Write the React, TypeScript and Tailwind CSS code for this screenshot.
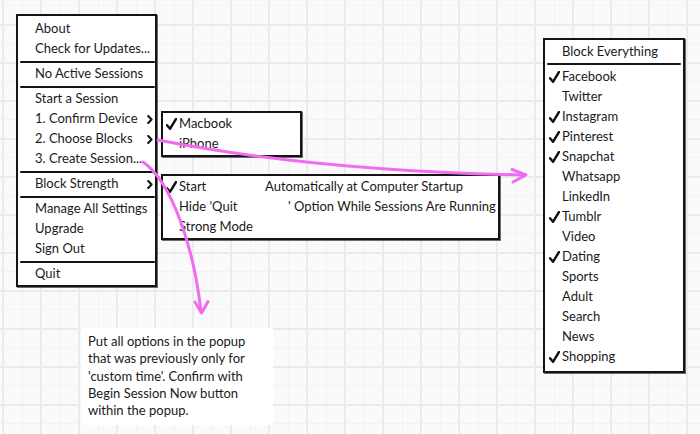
import React from 'react';

const font = "font-['Lato','Open_Sans',sans-serif]";

const Check = () => (
  <svg width="11" height="12" viewBox="0 0 11 12" className="shrink-0">
    <path d="M1 7.2 L4 10.8 L10 1" fill="none" stroke="#111" strokeWidth="2.4" strokeLinecap="round" strokeLinejoin="round" />
  </svg>
);

const Chevron = () => (
  <svg width="6" height="9" viewBox="0 0 6 9" className="shrink-0">
    <path d="M1.2 1 L4.6 4.5 L1.2 8" fill="none" stroke="#111" strokeWidth="2" strokeLinecap="round" strokeLinejoin="round" />
  </svg>
);

const Sep = () => <div className="ml-[2px] h-[2px] my-[1.5px] bg-[#141414] rounded-full" />;

const MenuRow = ({ label, sub }: { label: string; sub?: boolean }) => (
  <div className="h-5 flex items-center justify-between pl-[17px] pr-[2px]">
    <span>{label}</span>
    {sub && <Chevron />}
  </div>
);

const CheckRow = ({ label, checked }: { label: string; checked?: boolean }) => (
  <div className="h-5 flex items-center">
    <div className="w-[17px] pl-[4px] flex items-center">{checked && <Check />}</div>
    <span>{label}</span>
  </div>
);

const blocks: [string, boolean][] = [
  ['Facebook', true],
  ['Twitter', false],
  ['Instagram', true],
  ['Pinterest', true],
  ['Snapchat', true],
  ['Whatsapp', false],
  ['LinkedIn', false],
  ['Tumblr', true],
  ['Video', false],
  ['Dating', true],
  ['Sports', false],
  ['Adult', false],
  ['Search', false],
  ['News', false],
  ['Shopping', true],
];

const box = 'absolute bg-white border-2 border-[#141414] shadow-[1px_1px_0_#6b6b6b]';

export default function App() {
  return (
    <div className={`w-[700px] h-[434px] overflow-hidden bg-[#fafafa] bg-[linear-gradient(to_right,#f3f3f3_1px,transparent_1px),linear-gradient(to_bottom,#f3f3f3_1px,transparent_1px)] bg-[size:19px_19px] bg-[position:3px_5px] ${font} text-[13px] text-[#1a1a1a]`}>
      <div className="relative w-full h-full bg-[linear-gradient(to_right,#ebebeb_2px,transparent_2px),linear-gradient(to_bottom,#ebebeb_2px,transparent_2px)] bg-[size:38px_38px] bg-[position:2px_24px]">
        {/* main menu */}
        <div className={`${box} left-[16px] top-[14px] w-[141px] h-[273px] pt-[3px]`}>
          <MenuRow label="About" />
          <MenuRow label="Check for Updates..." />
          <Sep />
          <MenuRow label="No Active Sessions" />
          <Sep />
          <MenuRow label="Start a Session" />
          <MenuRow label="1. Confirm Device" sub />
          <MenuRow label="2. Choose Blocks" sub />
          <MenuRow label="3. Create Session..." />
          <Sep />
          <MenuRow label="Block Strength" sub />
          <Sep />
          <MenuRow label="Manage All Settings" />
          <MenuRow label="Upgrade" />
          <MenuRow label="Sign Out" />
          <Sep />
          <MenuRow label="Quit" />
        </div>

        {/* device submenu */}
        <div className={`${box} left-[161px] top-[111px] w-[141px] h-[46px] pt-[1px]`}>
          <div className="h-5 flex items-center">
            <div className="w-[16px] pl-[3px] flex items-center"><Check /></div>
            <span>Macbook</span>
          </div>
          <div className="h-5 flex items-center pl-[16px]">iPhone</div>
        </div>

        {/* strength submenu */}
        <div className={`${box} left-[161px] top-[174px] w-[339px] h-[66px] pt-[1px]`}>
          <div className="h-5 flex items-center">
            <div className="w-[16px] pl-[3px] flex items-center"><Check /></div>
            <span className="w-[86px]">Start</span>
            <span>Automatically at Computer Startup</span>
          </div>
          <div className="h-5 flex items-center pl-[16px]">
            <span className="w-[109px]">Hide 'Quit</span>
            <span>' Option While Sessions Are Running</span>
          </div>
          <div className="h-5 flex items-center pl-[16px]">Strong Mode</div>
        </div>

        {/* blocks list */}
        <div className={`${box} left-[543px] top-[38px] w-[142px] h-[335px] pt-[2px]`}>
          <div className="h-5 flex items-center pl-[17px]">Block Everything</div>
          <div className="mx-[2px] h-[2px] mt-[0.5px] mb-[2px] bg-[#141414] rounded-full" />
          {blocks.map(([name, on]) => (
            <CheckRow key={name} label={name} checked={on} />
          ))}
        </div>

        {/* note */}
        <div className="absolute left-[81px] top-[328px] w-[192px] h-[97px] bg-white px-[7px] pt-[5px] leading-[17.3px]">
          Put all options in the popup that was previously only for 'custom time'. Confirm with Begin Session Now button within the popup.
        </div>

        {/* annotation arrows */}
        <svg className="absolute inset-0 pointer-events-none" width="700" height="434" viewBox="0 0 700 434">
          <g fill="none" stroke="#f06cf0" strokeWidth="3" strokeLinecap="round" strokeLinejoin="round">
            <path d="M158 140 C 250 158 370 172 525 175" />
            <path d="M512 169.5 L526 175 L513 182" />
            <path d="M143 162 C 172 182 194 248 201 312" />
            <path d="M195 302 L201.5 313 L208 301.5" />
          </g>
        </svg>
      </div>
    </div>
  );
}
